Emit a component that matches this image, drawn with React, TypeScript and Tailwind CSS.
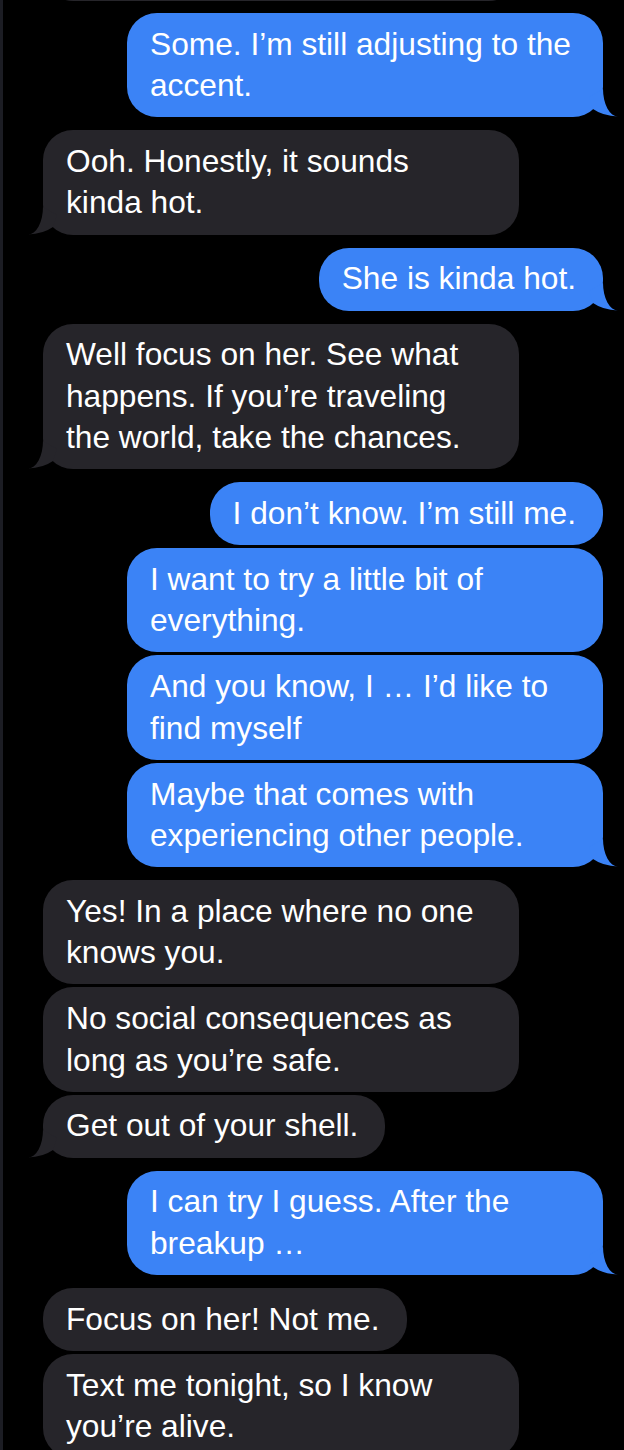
import React from 'react';

type Message = {
  fromMe: boolean;
  text: string;
  tail?: boolean;
};

const messages: Message[] = [
  { fromMe: true, text: 'Some. I’m still adjusting to the accent.', tail: true },
  { fromMe: false, text: 'Ooh. Honestly, it sounds kinda hot.', tail: true },
  { fromMe: true, text: 'She is kinda hot.', tail: true },
  {
    fromMe: false,
    text: 'Well focus on her. See what happens. If you’re traveling the world, take the chances.',
    tail: true,
  },
  { fromMe: true, text: 'I don’t know. I’m still me.' },
  { fromMe: true, text: 'I want to try a little bit of everything.' },
  { fromMe: true, text: 'And you know, I … I’d like to find myself' },
  { fromMe: true, text: 'Maybe that comes with experiencing other people.', tail: true },
  { fromMe: false, text: 'Yes! In a place where no one knows you.' },
  { fromMe: false, text: 'No social consequences as long as you’re safe.' },
  { fromMe: false, text: 'Get out of your shell.', tail: true },
  { fromMe: true, text: 'I can try I guess. After the breakup …', tail: true },
  { fromMe: false, text: 'Focus on her! Not me.' },
  { fromMe: false, text: 'Text me tonight, so I know you’re alive.' },
];

const Tail: React.FC<{ fromMe: boolean }> = ({ fromMe }) =>
  fromMe ? (
    <svg
      className="absolute bottom-0 right-[-16px] h-[32px] w-[32px] overflow-visible fill-[#3b83f6]"
      viewBox="-16 -32 32 32"
    >
      <path d="M0 -28 A15 27.5 0 0 0 15 -0.5 Q0 -1 -10 -8 L-14 -20 Z" />
    </svg>
  ) : (
    <svg
      className="absolute bottom-0 left-[-16px] h-[32px] w-[32px] overflow-visible fill-[#26252a]"
      viewBox="-16 -32 32 32"
    >
      <path d="M0 -28 A15 27.5 0 0 1 -15 -0.5 Q0 -1 10 -8 L14 -20 Z" />
    </svg>
  );

export default function App() {
  return (
    <div className="h-[1450px] w-full overflow-hidden border-l-[3px] border-[#1c1d24] bg-black font-['Liberation_Sans',Arial,sans-serif]">
      <div className="flex flex-col pl-[40px] pr-[21px]">
        {/* bottom edge of the previous bubble, scrolled off the top */}
        <div className="-mt-[104px] h-[105px] w-[476px] self-start rounded-[30px] bg-[#26252a]" />

        {messages.map((m, i) => {
          const prev = i === 0 ? null : messages[i - 1];
          const sameGroup = prev !== null && prev.fromMe === m.fromMe;
          return (
            <div
              key={i}
              className={`relative max-w-[476px] rounded-[30px] py-[10.75px] pl-[23px] pr-[27px] text-[31.7px] leading-[41.4px] text-white ${
                m.fromMe ? 'self-end bg-[#3b83f6]' : 'self-start bg-[#26252a]'
              } ${i === 0 ? 'mt-[12px]' : sameGroup ? 'mt-[3px]' : 'mt-[13px]'}`}
            >
              {m.text}
              {m.tail && <Tail fromMe={m.fromMe} />}
            </div>
          );
        })}
      </div>
    </div>
  );
}
